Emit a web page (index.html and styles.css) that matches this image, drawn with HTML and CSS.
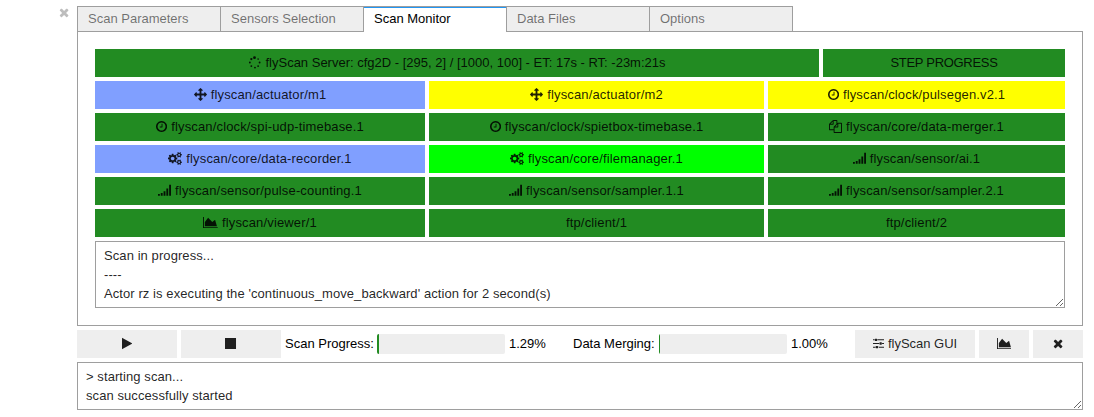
FILE: index.html
```html
<!DOCTYPE html>
<html lang="en">
<head>
<meta charset="utf-8">
<title>flyScan</title>
<link rel="stylesheet" href="styles.css">
</head>
<body>
<svg class="sprite" aria-hidden="true">
  <symbol id="move" viewBox="0 0 1792 1792"><path d="M1792 896q0 26-19 45l-256 256q-19 19-45 19t-45-19-19-45v-128h-384v384h128q26 0 45 19t19 45-19 45l-256 256q-19 19-45 19t-45-19l-256-256q-19-19-19-45t19-45 45-19h128v-384h-384v128q0 26-19 45t-45 19-45-19l-256-256q-19-19-19-45t19-45l256-256q19-19 45-19t45 19 19 45v128h384v-384h-128q-26 0-45-19t-19-45 19-45l256-256q19-19 45-19t45 19l256 256q19 19 19 45t-19 45-45 19h-128v384h384v-128q0-26 19-45t45-19 45 19l256 256q19 19 19 45z"/></symbol>
  <symbol id="clock" viewBox="128 0 1536 1792"><path d="M1024 544v448q0 14-9 23t-23 9h-320q-14 0-23-9t-9-23v-64q0-14 9-23t23-9h224v-352q0-14 9-23t23-9h64q14 0 23 9t9 23zm416 352q0-148-73-273t-198-198-273-73-273 73-198 198-73 273 73 273 198 198 273 73 273-73 198-198 73-273zm224 0q0 209-103 385.5t-279.5 279.5-385.5 103-385.5-103-279.5-279.5-103-385.5 103-385.5 279.5-279.5 385.5-103 385.5 103 279.5 279.5 103 385.5z"/></symbol>
  <symbol id="files" viewBox="0 0 1792 1792"><path d="M1696 384q40 0 68 28t28 68v1216q0 40-28 68t-68 28h-960q-40 0-68-28t-28-68v-288h-544q-40 0-68-28t-28-68v-672q0-40 20-88t48-76l408-408q28-28 76-48t88-20h416q40 0 68 28t28 68v328q68-40 128-40h416zm-544 213l-299 299h299v-299zm-640-384l-299 299h299v-299zm196 647l316-316v-416h-384v416q0 40-28 68t-68 28h-416v640h512v-256q0-40 20-88t48-76zm956 804v-1152h-384v416q0 40-28 68t-68 28h-416v640h896z"/></symbol>
  <symbol id="cogs" viewBox="0 0 1920 1792"><path d="M896 896q0-106-75-181t-181-75-181 75-75 181 75 181 181 75 181-75 75-181zm768 512q0-52-38-90t-90-38-90 38-38 90q0 53 37.5 90.500t90.500 37.500 90.500-37.500 37.500-90.500zm0-1024q0-52-38-90t-90-38-90 38-38 90q0 53 37.500 90.500t90.500 37.500 90.500-37.500 37.500-90.500zm-384 421v185q0 10-7 19.500t-16 10.500l-155 24q-11 35-32 76 34 48 90 115 7 11 7 20 0 12-7 19-23 30-82.500 89.500t-78.500 59.500q-11 0-21-7l-115-90q-37 19-77 31-11 108-23 155-7 24-30 24h-186q-11 0-20-7.500t-10-17.500l-23-153q-34-10-75-31l-118 89q-7 7-20 7-11 0-21-8-144-133-144-160 0-9 7-19 10-14 41-53t47-61q-23-44-35-82l-152-24q-10-1-17-9.500t-7-19.500v-185q0-10 7-19.500t16-10.500l155-24q11-35 32-76-34-48-90-115-7-11-7-20 0-12 7-20 22-30 82-89t79-59q11 0 21 7l115 90q34-18 77-32 11-108 23-154 7-24 30-24h186q11 0 20 7.500t10 17.500l23 153q34 10 75 31l118-89q8-7 20-7 11 0 21 8 144 133 144 160 0 8-7 19-12 16-42 54t-45 60q23 48 34 82l152 23q10 2 17 10.500t7 19.500zm640 533v140q0 16-149 31-12 27-30 52 51 113 51 138 0 4-4 7-122 71-124 71-8 0-46-47t-52-68q-20 2-30 2t-30-2q-14 21-52 68t-46 47q-2 0-124-71-4-3-4-7 0-25 51-138-18-25-30-52-149-15-149-31v-140q0-16 149-31 13-29 30-52-51-113-51-138 0-4 4-7 4-2 35-20t59-34 30-16q8 0 46 46.500t52 67.500q20-2 30-2t30 2q51-71 92-112l6-2q4 0 124 70 4 3 4 7 0 25-51 138 17 23 30 52 149 15 149 31zm0-1024v140q0 16-149 31-12 27-30 52 51 113 51 138 0 4-4 7-122 71-124 71-8 0-46-47t-52-68q-20 2-30 2t-30-2q-14 21-52 68t-46 47q-2 0-124-71-4-3-4-7 0-25 51-138-18-25-30-52-149-15-149-31v-140q0-16 149-31 13-29 30-52-51-113-51-138 0-4 4-7 4-2 35-20t59-34 30-16q8 0 46 46.500t52 67.500q20-2 30-2t30 2q51-71 92-112l6-2q4 0 124 70 4 3 4 7 0 25-51 138 17 23 30 52 149 15 149 31z"/></symbol>
  <symbol id="signal" viewBox="0 0 1792 1792"><path d="M0 1376h256v256H0zM384 1248h256v384H384zM768 992h256v640H768zM1152 608h256v1024h-256zM1536 96h256v1536h-256z"/></symbol>
  <symbol id="area" viewBox="0 0 2048 1792"><path d="M2048 1536v128H0V128h128v1408zM1664 512l256 896H256V832l448-576 576 576z"/></symbol>
  <symbol id="spinner" viewBox="0 0 1792 1792"><circle cx="462" cy="1394" r="128"/><circle cx="960" cy="1600" r="128"/><circle cx="256" cy="896" r="128"/><circle cx="1394" cy="1394" r="128"/><circle cx="462" cy="430" r="160"/><circle cx="1600" cy="896" r="128"/><circle cx="896" cy="224" r="192"/><circle cx="1394" cy="430" r="110"/></symbol>
  <symbol id="play" viewBox="192 0 1408 1792"><path d="M1576 927l-1328 738q-23 13-39.500 3t-16.500-36v-1472q0-26 16.500-36t39.500 3l1328 738q23 13 23 31t-23 31z"/></symbol>
  <symbol id="stop" viewBox="128 0 1536 1792"><path d="M1664 192v1408q0 26-19 45t-45 19H192q-26 0-45-19t-19-45V192q0-26 19-45t45-19h1408q26 0 45 19t19 45z"/></symbol>
  <symbol id="times" viewBox="192 0 1408 1792"><path d="M1490 1322q0 40-28 68l-136 136q-28 28-68 28t-68-28l-294-294-294 294q-28 28-68 28t-68-28l-136-136q-28-28-28-68t28-68l294-294-294-294q-28-28-28-68t28-68l136-136q28-28 68-28t68 28l294 294 294-294q28-28 68-28t68 28l136 136q28 28 28 68t-28 68l-294 294 294 294q28 28 28 68z"/></symbol>
  <symbol id="sliders" viewBox="0 0 1536 1792"><path d="M0 320h224v128H0zM608 320h928v128H608zM0 832h864v128H0zM1248 832h288v128h-288zM0 1344h352v128H0zM800 1344h736v128H800z"/><rect x="256" y="224" width="320" height="320" rx="64"/><rect x="896" y="736" width="320" height="320" rx="64"/><rect x="384" y="1248" width="320" height="320" rx="64"/></symbol>
</svg>
<div class="output">
  <div class="gutter"><svg class="icon times close"><use href="#times"/></svg></div>
  <main class="app">
    <nav class="tabs">
      <div class="tab">Scan Parameters</div>
      <div class="tab">Sensors Selection</div>
      <div class="tab current">Scan Monitor</div>
      <div class="tab">Data Files</div>
      <div class="tab">Options</div>
    </nav>
    <section class="panel">
      <div class="server">
        <button class="cell ok"><svg class="icon"><use href="#spinner"/></svg><span>flyScan Server: cfg2D - [295, 2] / [1000, 100] - ET: 17s - RT: -23m:21s</span></button>
        <button class="cell ok step"><span>STEP PROGRESS</span></button>
      </div>
      <div class="actors">
        <button class="cell moving"><svg class="icon"><use href="#move"/></svg><span>flyscan/actuator/m1</span></button>
        <button class="cell warn"><svg class="icon"><use href="#move"/></svg><span>flyscan/actuator/m2</span></button>
        <button class="cell warn"><svg class="icon clock"><use href="#clock"/></svg><span>flyscan/clock/pulsegen.v2.1</span></button>
        <button class="cell ok"><svg class="icon clock"><use href="#clock"/></svg><span>flyscan/clock/spi-udp-timebase.1</span></button>
        <button class="cell ok"><svg class="icon clock"><use href="#clock"/></svg><span>flyscan/clock/spietbox-timebase.1</span></button>
        <button class="cell ok"><svg class="icon"><use href="#files"/></svg><span>flyscan/core/data-merger.1</span></button>
        <button class="cell moving"><svg class="icon cogs"><use href="#cogs"/></svg><span>flyscan/core/data-recorder.1</span></button>
        <button class="cell open"><svg class="icon cogs"><use href="#cogs"/></svg><span>flyscan/core/filemanager.1</span></button>
        <button class="cell ok"><svg class="icon"><use href="#signal"/></svg><span>flyscan/sensor/ai.1</span></button>
        <button class="cell ok"><svg class="icon"><use href="#signal"/></svg><span>flyscan/sensor/pulse-counting.1</span></button>
        <button class="cell ok"><svg class="icon"><use href="#signal"/></svg><span>flyscan/sensor/sampler.1.1</span></button>
        <button class="cell ok"><svg class="icon"><use href="#signal"/></svg><span>flyscan/sensor/sampler.2.1</span></button>
        <button class="cell ok"><svg class="icon area"><use href="#area"/></svg><span>flyscan/viewer/1</span></button>
        <button class="cell ok"><span>ftp/client/1</span></button>
        <button class="cell ok"><span>ftp/client/2</span></button>
      </div>
      <textarea class="log status">Scan in progress...
----
Actor rz is executing the 'continuous_move_backward' action for 2 second(s)</textarea>
    </section>
    <div class="toolbar">
      <button class="cell wide"><svg class="icon play"><use href="#play"/></svg></button>
      <button class="cell wide"><svg class="icon stop"><use href="#stop"/></svg></button>
      <div class="progress scan">
        <span class="label">Scan Progress:</span>
        <div class="bar"><div class="fill" style="width: 1.29%"></div></div>
        <span class="value">1.29%</span>
      </div>
      <div class="progress merge">
        <span class="label">Data Merging:</span>
        <div class="bar"><div class="fill" style="width: 1%"></div></div>
        <span class="value">1.00%</span>
      </div>
      <button class="cell gui"><svg class="icon sliders"><use href="#sliders"/></svg><span>flyScan GUI</span></button>
      <button class="cell small"><svg class="icon area"><use href="#area"/></svg></button>
      <button class="cell small"><svg class="icon times"><use href="#times"/></svg></button>
    </div>
    <textarea class="log console">&gt; starting scan...
scan successfully started</textarea>
  </main>
</div>
</body>
</html>
```
FILE: styles.css
```css
* { box-sizing: border-box; }
body {
  margin: 0;
  background: #fff;
  color: #000;
  font: 13px/19px "Helvetica Neue", "Liberation Sans", Arial, sans-serif;
  overflow: hidden;
}
.sprite { position: absolute; width: 0; height: 0; }
.output { display: flex; padding-top: 6px; }
.gutter { width: 77px; flex: none; }
.app { width: 1006px; }

.icon { width: 13px; height: 13px; flex: none; fill: currentColor; display: block; }
.clock, .stop, .sliders { width: 11.14px; }
.cogs { width: 13.93px; }
.area { width: 14.86px; }
.play, .times { width: 10.21px; }
.close { margin: 0 0 0 58.500px; color: #bdbdbd; }

.tabs { display: flex; position: relative; }
.tab {
  width: 144px;
  height: 25px;
  margin-right: -1px;
  padding: 0 10px;
  border: 1px solid #9e9e9e;
  border-bottom: 0;
  background: #eee;
  color: rgba(0, 0, 0, .54);
  line-height: 24px;
}
.tab.current {
  height: 26px;
  margin-bottom: -1px;
  background: #fff;
  color: #000;
  box-shadow: inset 0 1px #2196f3;
}

.panel {
  height: 295px;
  padding: 17px;
  border: 1px solid #9e9e9e;
}
.server { display: grid; grid-template-columns: 724px 242px; gap: 4px; }
.actors {
  display: grid;
  grid-template-columns: 330px 335px 297px;
  gap: 4px;
  margin: 4px 0;
}
.cell {
  display: flex;
  align-items: center;
  justify-content: center;
  gap: 4px;
  height: 28px;
  padding: 0 10px;
  border: 0;
  background: #eee;
  color: rgba(0, 0, 0, .87);
  font: inherit;
  line-height: 28px;
  white-space: nowrap;
}
.cell .icon { margin-bottom: 1.500px; }
.actors .cell { letter-spacing: .15px; }
.step { letter-spacing: -.3px; }
.ok { background: #228b22; }
.moving { background: #809fff; }
.warn { background: #ff0; }
.open { background: #0f0; }

.log {
  display: block;
  width: 100%;
  margin: 0;
  padding: 4px 8px;
  border: 1px solid #9e9e9e;
  outline: 0;
  background: #fff;
  color: rgba(0, 0, 0, .87);
  font: inherit;
  letter-spacing: .08px;
  overflow: hidden;
}
.status { height: 67px; }
.console { height: 48px; }

.toolbar { display: flex; gap: 4px; margin: 4px 0; }
.wide { width: 100px; }
.gui { width: 120px; }
.small { width: 50px; }
.progress { display: flex; align-items: center; height: 28px; white-space: nowrap; }
.scan { width: 284px; }
.merge { width: 278px; }
.label, .value { padding-bottom: 2px; }
.label { width: 92px; }
.merge .label { width: 86px; }
.bar { width: 128px; height: 20px; margin-right: 4px; border-radius: 2px; background: #eee; overflow: hidden; }
.fill { height: 100%; background: #228b22; }
```
